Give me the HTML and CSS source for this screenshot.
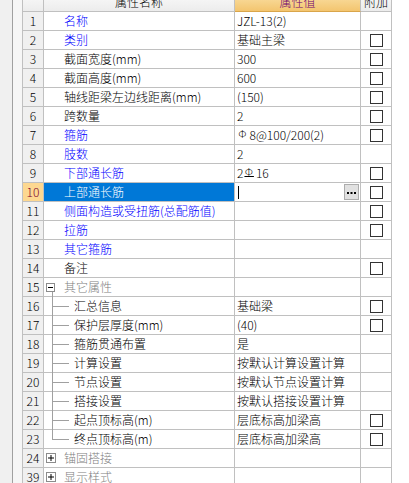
FILE: index.html
```html
<!DOCTYPE html>
<html lang="zh-CN">
<head>
<meta charset="utf-8">
<title>属性编辑</title>
<link rel="stylesheet" href="styles.css">
</head>
<body>
<div class="page">
  <div class="strip-a"></div>
  <div class="strip-b"></div>
  <div class="grid">
    <div class="hd hd-num"></div>
    <div class="hd hd-name">属性名称</div>
    <div class="hd hd-val">属性值</div>
    <div class="hd hd-att">附加</div>

    <div class="num">1</div><div class="name blue">名称</div><div class="val">JZL-13(2)</div><div class="att"></div>
    <div class="num">2</div><div class="name blue">类别</div><div class="val">基础主梁</div><div class="att"><span class="cb"></span></div>
    <div class="num">3</div><div class="name">截面宽度(mm)</div><div class="val">300</div><div class="att"><span class="cb"></span></div>
    <div class="num">4</div><div class="name">截面高度(mm)</div><div class="val">600</div><div class="att"><span class="cb"></span></div>
    <div class="num">5</div><div class="name">轴线距梁左边线距离(mm)</div><div class="val">(150)</div><div class="att"><span class="cb"></span></div>
    <div class="num">6</div><div class="name">跨数量</div><div class="val">2</div><div class="att"><span class="cb"></span></div>
    <div class="num">7</div><div class="name blue">箍筋</div><div class="val"><span class="bar-a">Φ</span>8@100/200(2)</div><div class="att"><span class="cb"></span></div>
    <div class="num">8</div><div class="name blue">肢数</div><div class="val">2</div><div class="att"></div>
    <div class="num">9</div><div class="name blue">下部通长筋</div><div class="val">2<span class="bar-c">Φ</span>16</div><div class="att"><span class="cb"></span></div>
    <div class="num num-sel">10</div><div class="name sel">上部通长筋</div><div class="val val-edit"><span class="caret"></span><span class="more"><svg width="13" height="14" viewBox="0 0 13 14"><rect x="2" y="7" width="2" height="2" fill="#000"/><rect x="5.5" y="7" width="2" height="2" fill="#000"/><rect x="9" y="7" width="2" height="2" fill="#000"/></svg></span></div><div class="att"><span class="cb"></span></div>
    <div class="num">11</div><div class="name blue">侧面构造或受扭筋(总配筋值)</div><div class="val"></div><div class="att"><span class="cb"></span></div>
    <div class="num">12</div><div class="name blue">拉筋</div><div class="val"></div><div class="att"><span class="cb"></span></div>
    <div class="num">13</div><div class="name blue">其它箍筋</div><div class="val"></div><div class="att"></div>
    <div class="num">14</div><div class="name">备注</div><div class="val"></div><div class="att"><span class="cb"></span></div>

    <div class="num">15</div><div class="name group open"><span class="tog"><svg width="9" height="9" viewBox="0 0 9 9"><rect x="0.5" y="0.5" width="8" height="8" fill="#fff" stroke="#8c8c8c"/><line x1="2" y1="4.5" x2="7" y2="4.5" stroke="#000"/></svg></span>其它属性</div><div class="val"></div><div class="att"></div>
    <div class="num">16</div><div class="name child">汇总信息</div><div class="val">基础梁</div><div class="att"><span class="cb"></span></div>
    <div class="num">17</div><div class="name child">保护层厚度(mm)</div><div class="val">(40)</div><div class="att"><span class="cb"></span></div>
    <div class="num">18</div><div class="name child">箍筋贯通布置</div><div class="val">是</div><div class="att"></div>
    <div class="num">19</div><div class="name child">计算设置</div><div class="val">按默认计算设置计算</div><div class="att"></div>
    <div class="num">20</div><div class="name child">节点设置</div><div class="val">按默认节点设置计算</div><div class="att"></div>
    <div class="num">21</div><div class="name child">搭接设置</div><div class="val">按默认搭接设置计算</div><div class="att"></div>
    <div class="num">22</div><div class="name child">起点顶标高(m)</div><div class="val">层底标高加梁高</div><div class="att"><span class="cb"></span></div>
    <div class="num">23</div><div class="name child last">终点顶标高(m)</div><div class="val">层底标高加梁高</div><div class="att"><span class="cb"></span></div>

    <div class="num">24</div><div class="name group"><span class="tog"><svg width="10" height="10" viewBox="0 0 10 10"><rect x="0.5" y="0.5" width="9" height="9" fill="#fff" stroke="#8c8c8c"/><line x1="2" y1="5" x2="8" y2="5" stroke="#000"/><line x1="5" y1="2" x2="5" y2="8" stroke="#000"/></svg></span>锚固搭接</div><div class="val"></div><div class="att"></div>
    <div class="num">39</div><div class="name group"><span class="tog"><svg width="10" height="10" viewBox="0 0 10 10"><rect x="0.5" y="0.5" width="9" height="9" fill="#fff" stroke="#8c8c8c"/><line x1="2" y1="5" x2="8" y2="5" stroke="#000"/><line x1="5" y1="2" x2="5" y2="8" stroke="#000"/></svg></span>显示样式</div><div class="val"></div><div class="att"></div>
  </div>
</div>
</body>
</html>
```

FILE: styles.css
```css
html, body {
  margin: 0;
  padding: 0;
  background: #ffffff;
}

.page {
  display: flex;
  height: 483px;
  overflow: hidden;
  font-family: "Noto Sans CJK SC", "Noto Sans", sans-serif;
  font-size: 12px;
  font-weight: 300;
  color: #000;
}

.strip-a {
  width: 12px;
  flex: none;
  background: #f0f0f0;
  border-right: 1px solid #a0a0a0;
}

.strip-b {
  width: 9px;
  flex: none;
  background: #f6f6f6;
}

.grid {
  display: grid;
  grid-template-columns: 21px 191px 126px 31px;
  grid-auto-rows: 19px;
  align-content: start;
  margin-top: -7px;
  border-left: 1px solid #c0c0c0;
  flex: none;
  align-self: flex-start;
}

.grid > div {
  box-sizing: border-box;
  border-right: 1px solid #c0c0c0;
  border-bottom: 1px solid #c0c0c0;
  display: flex;
  align-items: center;
  white-space: nowrap;
  overflow: hidden;
  line-height: 18px;
}

.hd {
  justify-content: center;
  background: linear-gradient(#fafafa, #ececec);
  color: #000;
}

.hd-val {
  background: linear-gradient(#fbe1a8, #f3c56f);
  color: #700070;
  border-bottom-color: #d9a54a !important;
}

.num {
  justify-content: center;
  background: #f0f0f0;
  color: #000;
}

.num-sel {
  background: #fdd891;
  color: #7a0030;
}

.name {
  padding-left: 20px;
  position: relative;
  overflow: visible !important;
}

.blue {
  color: #0000ff;
}

.sel {
  background: #0078d7;
  color: #ffffff;
}

.group {
  padding-left: 2px;
  color: #808080;
}

.tog {
  display: flex;
  width: 10px;
  height: 10px;
  margin-right: 8px;
  align-items: center;
  justify-content: flex-start;
}

.group.open .tog {
  margin-right: 9px;
  width: 9px;
}

.group.open::after {
  content: "";
  position: absolute;
  left: 8px;
  top: 14px;
  bottom: -1px;
  border-left: 1px solid #a0a0a0;
}

.child {
  padding-left: 30px;
}

.child::before {
  content: "";
  position: absolute;
  left: 8px;
  top: 0;
  bottom: -1px;
  border-left: 1px solid #a0a0a0;
}

.child.last::before {
  bottom: auto;
  height: 10px;
}

.child::after {
  content: "";
  position: absolute;
  left: 8px;
  top: 9px;
  width: 17px;
  border-top: 1px solid #a0a0a0;
}

.val {
  padding-left: 2px;
  background: #ffffff;
}

.bar-a,
.bar-c {
  font-family: "DejaVu Sans", sans-serif;
  font-size: 11px;
  margin: 0 2px 0 1px;
}

.bar-c {
  text-decoration: underline;
  text-underline-offset: 0;
}

.val-edit {
  justify-content: space-between;
  padding-right: 1px;
}

.caret {
  display: block;
  width: 1px;
  height: 13px;
  background: #000;
  margin-left: 1px;
}

.more {
  display: flex;
  align-items: center;
  justify-content: center;
  box-sizing: border-box;
  width: 15px;
  height: 16px;
  background: #e1e1e1;
  border: 1px solid #adadad;
}

.att {
  justify-content: center;
  background: #ffffff;
}

.cb {
  display: block;
  box-sizing: border-box;
  width: 13px;
  height: 13px;
  border: 1px solid #333333;
  background: #ffffff;
}
```
